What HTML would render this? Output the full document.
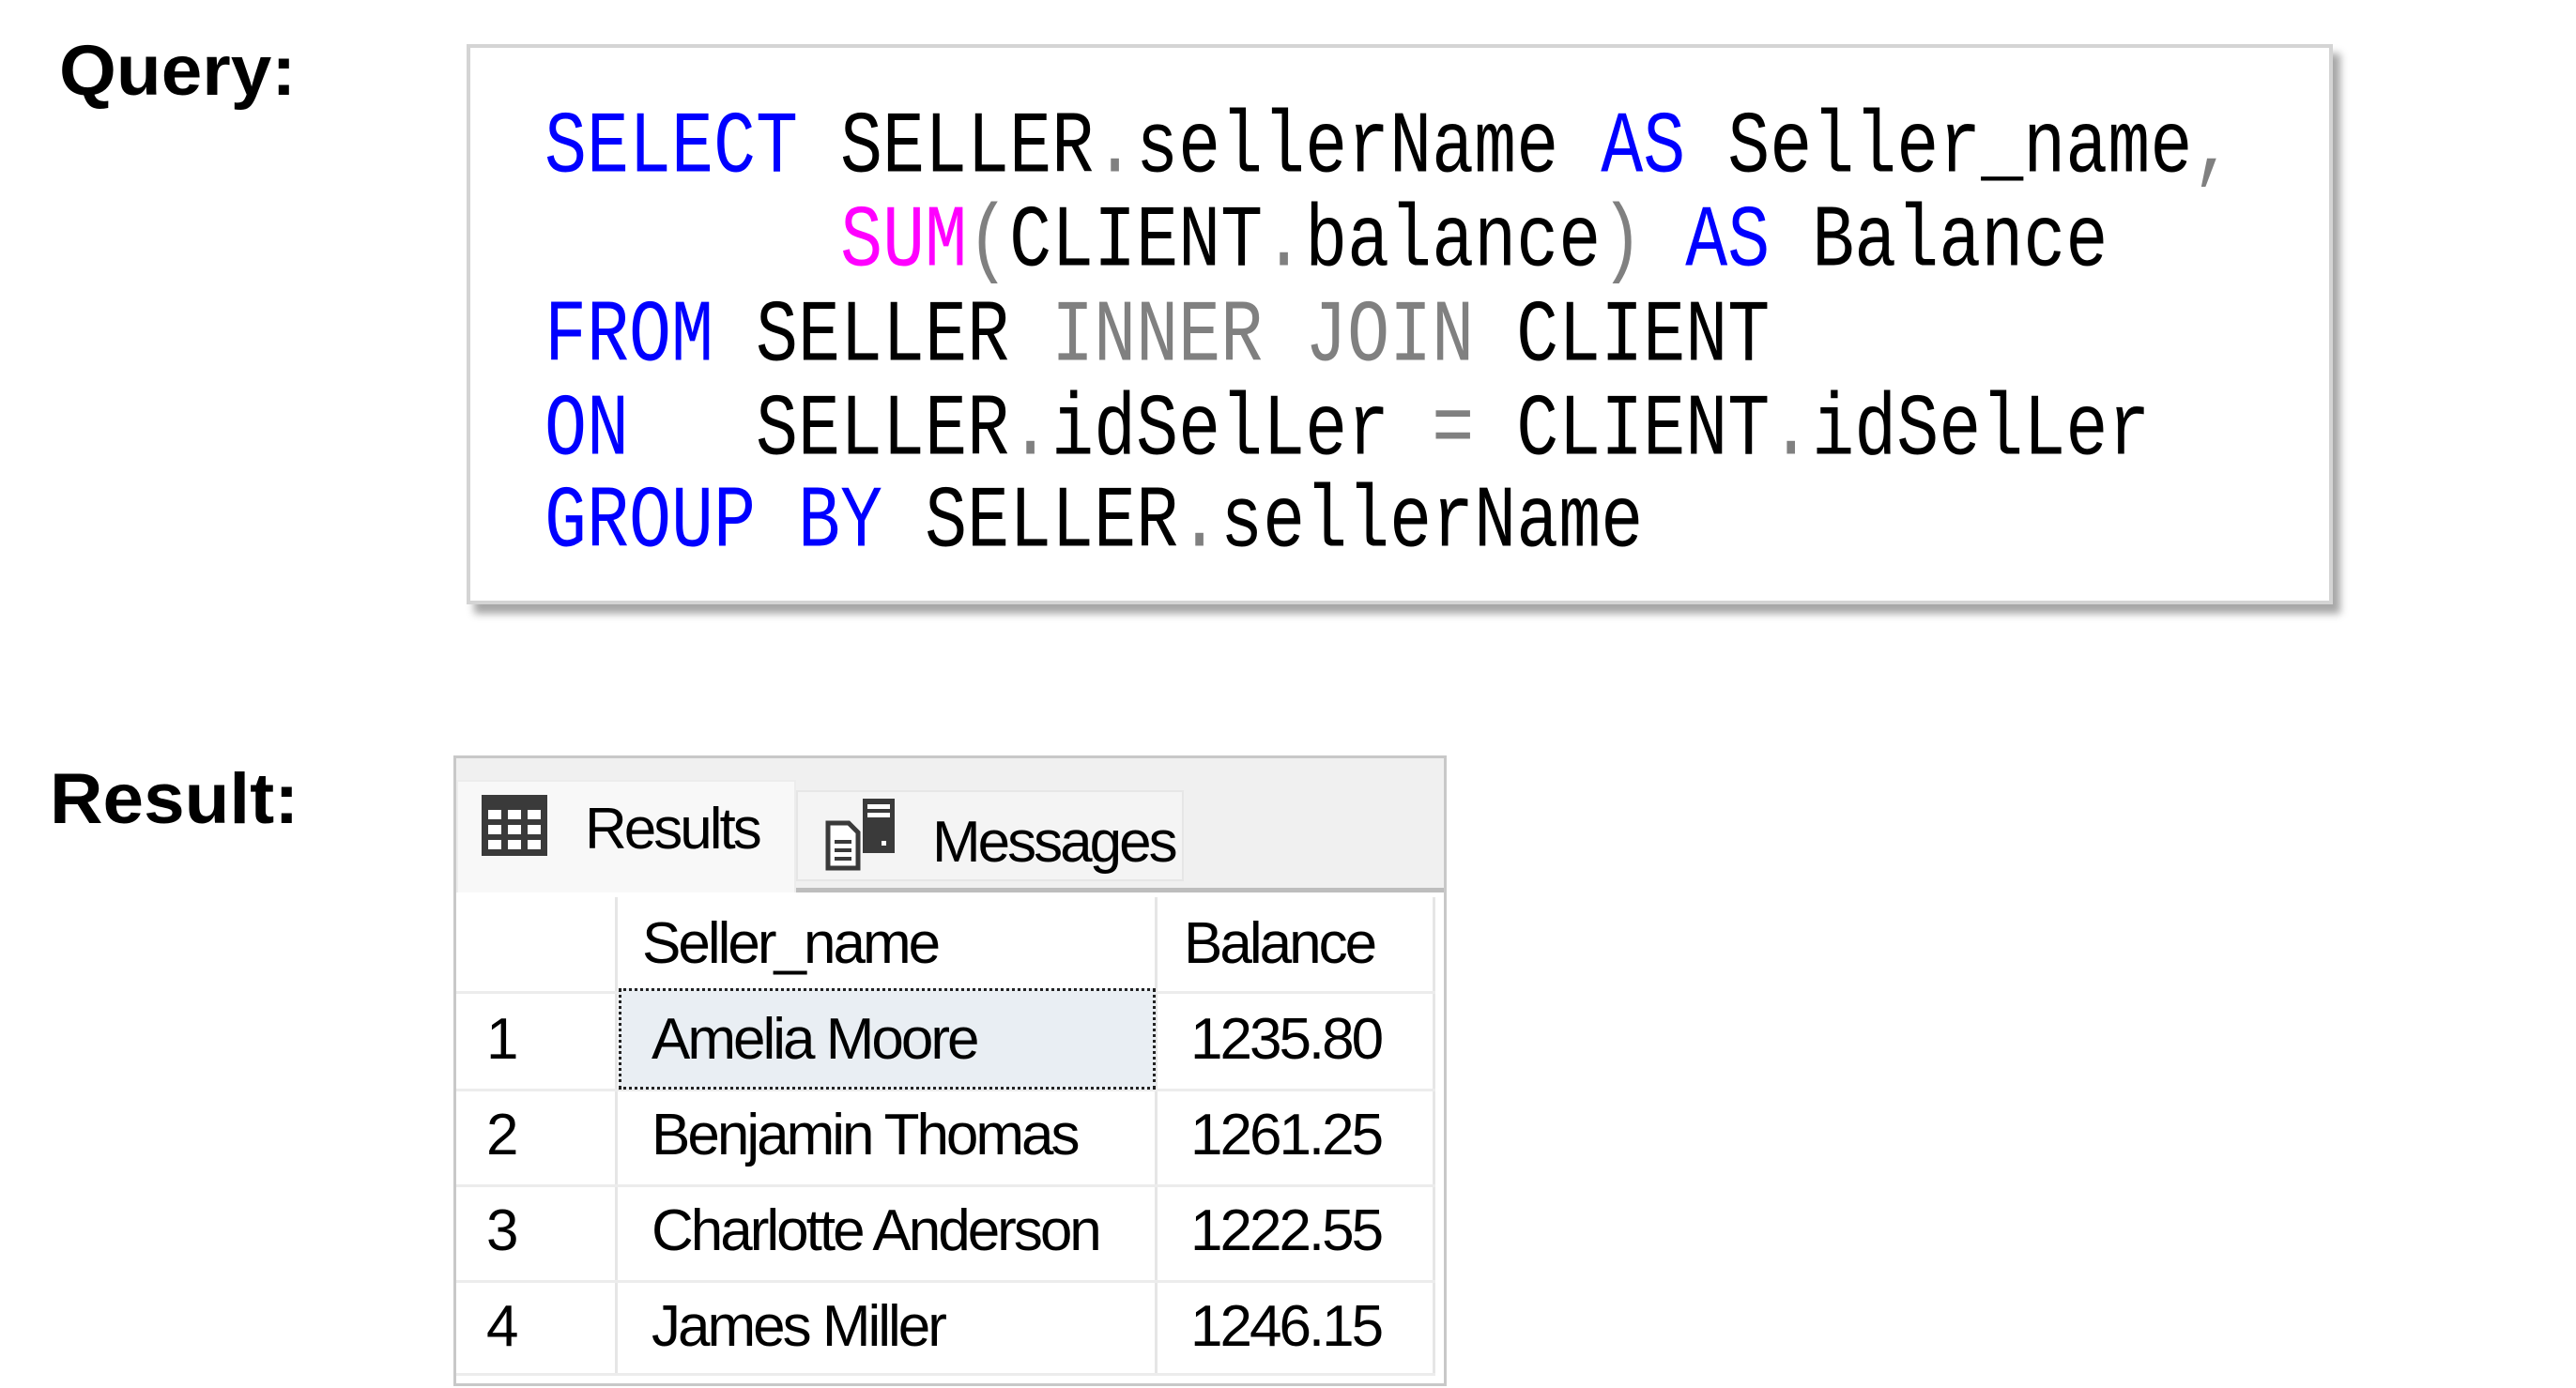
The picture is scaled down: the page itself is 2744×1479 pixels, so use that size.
<!DOCTYPE html>
<html><head><meta charset="utf-8"><style>
*{margin:0;padding:0;box-sizing:border-box}
body{width:2744px;height:1479px;background:#fff;position:relative;overflow:hidden;font-family:"Liberation Sans",sans-serif}
.a{position:absolute;white-space:pre}
.lbl{font-weight:bold;font-size:76px;color:#000;transform:scaleX(1.03);transform-origin:left}
.code{position:absolute;left:497px;top:47px;width:1988px;height:597px;background:#fff;border:4px solid #d4d4d4;box-shadow:8px 10px 8px rgba(0,0,0,0.35)}
.ln{position:absolute;left:580px;font-family:"Liberation Mono",monospace;font-size:75px;color:#000;white-space:pre;transform:scaleY(1.25);transform-origin:left bottom;line-height:1}
.k{color:#0000ff}.f{color:#ff00ff}.g{color:#808080}
.panel{position:absolute;left:483px;top:805px;width:1058px;height:672px;border:3px solid #c8c8c8;background:#fff;overflow:hidden}
.strip{position:absolute;left:0;top:0;width:100%;height:143px;background:#f0f0f0;border-bottom:5px solid #bdbdbd}
.t{font-size:62px;color:#000;letter-spacing:-3px}
.vl{position:absolute;width:3px;background:#e6e6e6}
.hl{position:absolute;height:3px;background:#ececec}
</style></head><body>
<div class="a lbl" style="left:63px;top:32px">Query:</div>
<div class="a lbl" style="left:53px;top:808px">Result:</div>

<div class="code"></div>
<div class="ln" style="top:130px"><span class="k">SELECT</span> SELLER<span class="g">.</span>sellerName <span class="k">AS</span> Seller_name<span class="g">,</span></div>
<div class="ln" style="top:230px">       <span class="f">SUM</span><span class="g">(</span>CLIENT<span class="g">.</span>balance<span class="g">)</span> <span class="k">AS</span> Balance</div>
<div class="ln" style="top:331px"><span class="k">FROM</span> SELLER <span class="g">INNER JOIN</span> CLIENT</div>
<div class="ln" style="top:431px"><span class="k">ON</span>   SELLER<span class="g">.</span>idSelLer <span class="g">=</span> CLIENT<span class="g">.</span>idSelLer</div>
<div class="ln" style="top:529px"><span class="k">GROUP BY</span> SELLER<span class="g">.</span>sellerName</div>

<div class="panel">
 <div class="strip"></div>
 <div style="position:absolute;left:0;top:23px;width:362px;height:120px;background:#f8f8f8;border:2px solid #ececec;border-bottom:none"></div>
 <div style="position:absolute;left:362px;top:34px;width:413px;height:97px;background:#f4f4f4;border:2px solid #e6e6e6"></div>
 <svg style="position:absolute;left:27px;top:39px" width="70" height="65" viewBox="0 0 70 65"><rect x="0" y="0" width="70" height="65" fill="#3a3a3a"/><g fill="#fff"><rect x="7" y="16" width="14" height="10"/><rect x="28" y="16" width="14" height="10"/><rect x="49" y="16" width="14" height="10"/><rect x="7" y="32" width="14" height="10"/><rect x="28" y="32" width="14" height="10"/><rect x="49" y="32" width="14" height="10"/><rect x="7" y="48" width="14" height="10"/><rect x="28" y="48" width="14" height="10"/><rect x="49" y="48" width="14" height="10"/></g></svg>
 <svg style="position:absolute;left:393px;top:43px" width="78" height="78" viewBox="0 0 78 78"><rect x="40" y="0" width="34" height="58" fill="#3a3a3a"/><rect x="45" y="6" width="24" height="5" fill="#fff"/><rect x="45" y="15" width="24" height="5" fill="#fff"/><rect x="60" y="45" width="5" height="5" fill="#fff"/><path d="M3 26h22l10 10v38H3z" fill="#fff" stroke="#3a3a3a" stroke-width="5"/><g stroke="#3a3a3a" stroke-width="4"><line x1="10" y1="46" x2="28" y2="46"/><line x1="10" y1="55" x2="28" y2="55"/><line x1="10" y1="64" x2="28" y2="64"/></g></svg>
 <div class="a t" style="left:137px;top:40px">Results</div>
 <div class="a t" style="left:507px;top:54px">Messages</div>

 <div class="vl" style="left:169px;top:148px;height:510px"></div>
 <div class="vl" style="left:744px;top:148px;height:510px"></div>
 <div class="vl" style="left:1040px;top:148px;height:510px"></div>
 <div class="hl" style="left:0;top:248px;width:1043px"></div>
 <div class="hl" style="left:0;top:352px;width:1043px"></div>
 <div class="hl" style="left:0;top:454px;width:1043px"></div>
 <div class="hl" style="left:0;top:556px;width:1043px"></div>
 <div class="hl" style="left:0;top:655px;width:1043px"></div>
 <div style="position:absolute;left:173px;top:245px;width:572px;height:108px;background:#e9eef3;border:3px dotted #222"></div>

 <div class="a t" style="left:198px;top:162px">Seller_name</div>
 <div class="a t" style="left:775px;top:162px">Balance</div>
 <div class="a t" style="left:32px;top:264px">1</div>
 <div class="a t" style="left:208px;top:264px">Amelia Moore</div>
 <div class="a t" style="left:782px;top:264px">1235.80</div>
 <div class="a t" style="left:32px;top:366px">2</div>
 <div class="a t" style="left:208px;top:366px">Benjamin Thomas</div>
 <div class="a t" style="left:782px;top:366px">1261.25</div>
 <div class="a t" style="left:32px;top:468px">3</div>
 <div class="a t" style="left:208px;top:468px">Charlotte Anderson</div>
 <div class="a t" style="left:782px;top:468px">1222.55</div>
 <div class="a t" style="left:32px;top:570px">4</div>
 <div class="a t" style="left:208px;top:570px">James Miller</div>
 <div class="a t" style="left:782px;top:570px">1246.15</div>
</div>
</body></html>
